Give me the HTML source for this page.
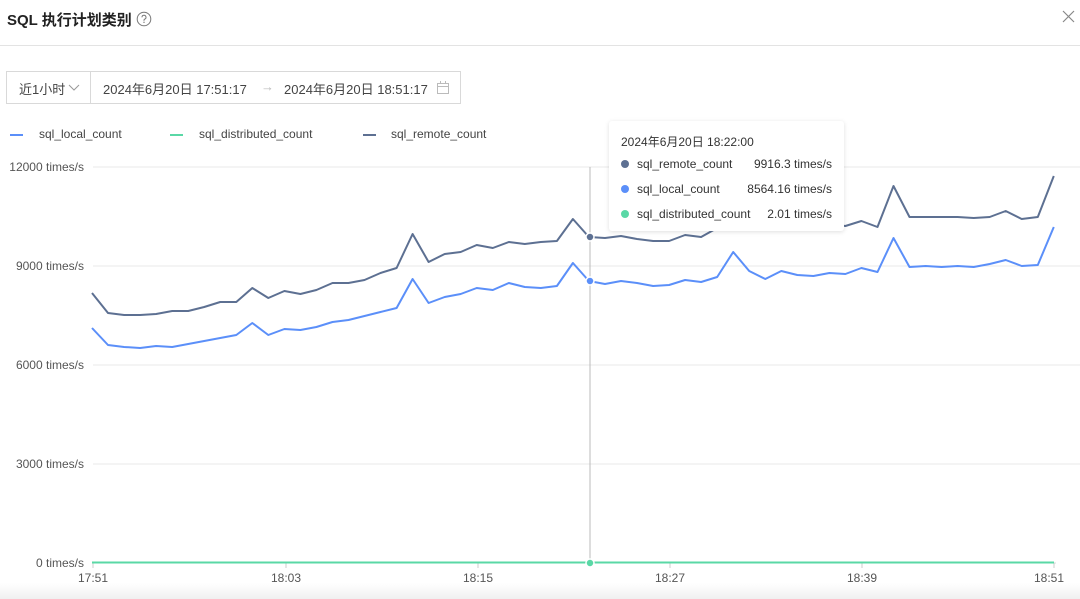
<!DOCTYPE html>
<html><head><meta charset="utf-8"><style>
*{margin:0;padding:0;box-sizing:border-box}
body{width:1080px;height:599px;overflow:hidden;background:#fff;font-family:"Liberation Sans","Noto Sans CJK SC",sans-serif;position:relative;color:#333}
.t{position:absolute;left:7px;top:9px;font-size:15px;font-weight:bold;color:#222}
.hr{position:absolute;left:0;top:45px;width:1080px;height:1px;background:#e3e3e3}
.box{position:absolute;left:6px;top:71px;width:455px;height:33px;border:1px solid #d9d9d9;font-size:13px;color:#444}
.box span{position:absolute;top:7px}
.lg{position:absolute;top:127px;font-size:12px;color:#444}
.lg i{position:absolute;top:7px;width:13px;height:2px}
.yl{position:absolute;right:996px;font-size:12px;color:#555;white-space:nowrap}
.xl{position:absolute;top:571px;font-size:12px;color:#555;transform:translateX(-50%)}
.tip{position:absolute;left:609px;top:121px;width:235px;height:110px;background:#fff;border-radius:3px;box-shadow:0 1px 5px rgba(0,0,0,.13);font-size:12px;color:#333}
.tip div{position:absolute;white-space:nowrap}
.d{width:8px;height:8px;border-radius:50%;left:12px}
</style></head><body>
<div class="t">SQL 执行计划类别 <svg width="16" height="16" style="vertical-align:-2px" viewBox="0 0 16 16"><circle cx="8" cy="8" r="6.8" fill="none" stroke="#777" stroke-width="1"/><path d="M6 6.3a2 2 0 1 1 2.7 1.8c-.5.2-.7.5-.7 1v.7" fill="none" stroke="#777" stroke-width="1"/><circle cx="8" cy="11.3" r=".7" fill="#777"/></svg></div>
<svg style="position:absolute;left:1062px;top:10px" width="13" height="13"><path d="M1 1L12 12M12 1L1 12" stroke="#888" stroke-width="1.2"/></svg>
<div class="hr"></div>
<div class="box"><span style="left:12px">近1小时</span><svg style="position:absolute;left:61px;top:12px" width="12" height="8"><path d="M1 1l5 5 5-5" fill="none" stroke="#999"/></svg>
<div style="position:absolute;left:83px;top:0;width:1px;height:31px;background:#d9d9d9"></div>
<span style="left:96px">2024年6月20日 17:51:17</span><span style="left:254px;color:#bbb">→</span><span style="left:277px">2024年6月20日 18:51:17</span>
<svg style="position:absolute;left:430px;top:9px" width="12" height="13"><rect x=".5" y="2.5" width="11" height="10" fill="none" stroke="#bbb"/><path d="M.5 5.5h11M3.5 0v3M8.5 0v3" stroke="#bbb"/></svg></div>
<div class="lg" style="left:10px"><i style="left:0;background:#5b8ff9"></i><span style="position:absolute;left:29px;white-space:nowrap">sql_local_count</span></div>
<div class="lg" style="left:170px"><i style="left:0;background:#5ad8a6"></i><span style="position:absolute;left:29px;white-space:nowrap">sql_distributed_count</span></div>
<div class="lg" style="left:363px"><i style="left:0;background:#5d7092"></i><span style="position:absolute;left:28px;white-space:nowrap">sql_remote_count</span></div>
<div class="yl" style="top:160px">12000 times/s</div>
<div class="yl" style="top:259px">9000 times/s</div>
<div class="yl" style="top:358px">6000 times/s</div>
<div class="yl" style="top:457px">3000 times/s</div>
<div class="yl" style="top:556px">0 times/s</div>
<div class="xl" style="left:93px">17:51</div><div class="xl" style="left:286px">18:03</div><div class="xl" style="left:478px">18:15</div><div class="xl" style="left:670px">18:27</div><div class="xl" style="left:862px">18:39</div><div class="xl" style="left:1049px">18:51</div>
<svg id="c" style="position:absolute;left:0;top:0" width="1080" height="599"></svg>
<div style="position:absolute;left:0;top:583px;width:1080px;height:16px;background:linear-gradient(#fff,#f0f0f0)"></div>
<div class="tip">
<div style="left:12px;top:12px">2024年6月20日 18:22:00</div>
<div class="d" style="top:39px;background:#5d7092"></div><div style="left:28px;top:36px">sql_remote_count</div><div style="right:12px;top:36px">9916.3 times/s</div>
<div class="d" style="top:64px;background:#5b8ff9"></div><div style="left:28px;top:61px">sql_local_count</div><div style="right:12px;top:61px">8564.16 times/s</div>
<div class="d" style="top:89px;background:#5ad8a6"></div><div style="left:28px;top:86px">sql_distributed_count</div><div style="right:12px;top:86px">2.01 times/s</div>
</div>
<script>
var R=[293,313,315,315,314,311,311,307,302,302,288,298,291,294,290,283,283,280,273,268,234,262,254,252,245,248,242,244,242,241,219,237,238,236,239,241,241,235,237,228,225,219,226,224,216,226,224,226,221,227,186,217,217,217,217,218,217,211,219,217,176];
var L=[328,345,347,348,346,347,344,341,338,335,323,335,329,330,327,322,320,316,312,308,279,303,297,294,288,290,283,287,288,286,263,281,284,281,283,286,285,280,282,277,252,271,279,271,275,276,273,274,268,272,238,267,266,267,266,267,264,260,266,265,227];
function P(a){return a.map(function(y,i){return (92+i*16.03).toFixed(1)+','+y}).join(' ')}
var s='';
[167,266,365,464].forEach(function(y){s+='<line x1="93" x2="1080" y1="'+y+'" y2="'+y+'" stroke="#e8e8e8"/>'});
s+='<line x1="93" x2="1056" y1="563" y2="563" stroke="#d9d9d9"/>';
[93,286,478,670,862,1054].forEach(function(x){s+='<line x1="'+x+'" x2="'+x+'" y1="563" y2="568" stroke="#ccc"/>'});
s+='<line x1="590" x2="590" y1="167" y2="563" stroke="#bbb"/>';
s+='<polyline points="'+P(R)+'" fill="none" stroke="#5d7092" stroke-width="2" stroke-linejoin="round"/>';
s+='<polyline points="'+P(L)+'" fill="none" stroke="#5b8ff9" stroke-width="2" stroke-linejoin="round"/>';
s+='<line x1="92" x2="1054" y1="562.5" y2="562.5" stroke="#5ad8a6" stroke-width="2"/>';
s+='<circle cx="590" cy="237" r="4" fill="#5d7092" stroke="#fff" stroke-width="1.5"/><circle cx="590" cy="281" r="4" fill="#5b8ff9" stroke="#fff" stroke-width="1.5"/><circle cx="590" cy="563" r="4" fill="#5ad8a6" stroke="#fff" stroke-width="1.5"/>';
document.getElementById('c').innerHTML=s;
</script>
</body></html>
